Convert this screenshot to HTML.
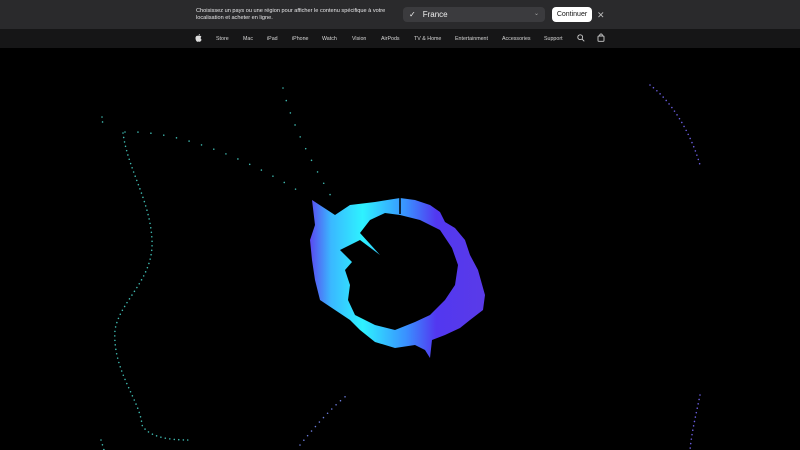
<!DOCTYPE html>
<html><head><meta charset="utf-8"><style>
*{margin:0;padding:0;box-sizing:border-box}
body{width:800px;height:450px;background:#000;overflow:hidden;font-family:"Liberation Sans",sans-serif;position:relative}
.top{position:absolute;left:0;top:0;width:800px;height:29px;background:#2a2a2c}
.msg{position:absolute;left:196px;top:8px;font-size:5.6px;line-height:7px;color:#e8e8ea;width:190px}
.sel{position:absolute;left:403px;top:7px;width:142px;height:15px;background:#3b3b3e;border-radius:4px;color:#f0f0f0;font-size:8px;line-height:15px;padding-left:6px}
.sel .c{margin-right:7px}
.sel .a{position:absolute;right:6px;top:0;font-size:6px;color:#aaa}
.btn{position:absolute;left:552px;top:7px;width:40px;height:15px;background:#fff;border-radius:4px;color:#111;font-size:7px;line-height:15px;text-align:center}
.x{position:absolute;left:597px;top:9px;color:#bbb;font-size:9px;line-height:12px}
.nav{position:absolute;left:0;top:29px;width:800px;height:19px;background:#161617}
.nav span{position:absolute;top:6.5px;font-size:5.3px;color:#d6d6d6}
</style></head><body>
<div class="top">
<div class="msg">Choisissez un pays ou une région pour afficher le contenu spécifique à votre localisation et acheter en ligne.</div>
<div class="sel"><span class="c">✓</span>France<span class="a">⌄</span></div>
<div class="btn">Continuer</div>
<div class="x">✕</div>
</div>
<div class="nav">
<svg style="position:absolute;left:195px;top:5px" width="7" height="8" viewBox="0 0 7 8"><path d="M3.5 2C2.5 1.5 0.5 1.8 0.5 4.2 0.5 6 1.8 8 2.6 7.8 3.1 7.6 3.9 7.6 4.4 7.8 5.3 8 6.4 6.5 6.6 5.6 5.5 5 5.4 3.3 6.4 2.7 5.6 1.6 4.3 1.7 3.5 2ZM3.5 1.6C3.5 0.8 4.2 0.1 4.9 0 5 0.8 4.3 1.6 3.5 1.6Z" fill="#ddd"/></svg>
<span style="left:216px">Store</span><span style="left:243px">Mac</span><span style="left:267px">iPad</span><span style="left:292px">iPhone</span><span style="left:322px">Watch</span><span style="left:352px">Vision</span><span style="left:381px">AirPods</span><span style="left:414px">TV &amp; Home</span><span style="left:455px">Entertainment</span><span style="left:502px">Accessories</span><span style="left:544px">Support</span>
<svg style="position:absolute;left:577px;top:5px" width="8" height="8" viewBox="0 0 8 8"><circle cx="3.2" cy="3.2" r="2.4" fill="none" stroke="#ccc" stroke-width="0.9"/><path d="M5 5 7.3 7.3" stroke="#ccc" stroke-width="0.9"/></svg>
<svg style="position:absolute;left:597px;top:4px" width="8" height="9" viewBox="0 0 8 9"><rect x="1" y="3" width="6" height="5.3" rx="0.8" fill="none" stroke="#ccc" stroke-width="0.9"/><path d="M2.7 3V2.2a1.3 1.3 0 0 1 2.6 0V3" fill="none" stroke="#ccc" stroke-width="0.9"/></svg>
</div>
<svg style="position:absolute;left:0;top:0" width="800" height="450">
<defs><linearGradient id="g" x1="310" y1="0" x2="485" y2="0" gradientUnits="userSpaceOnUse">
<stop offset="0" stop-color="#5a48f0"/><stop offset="0.12" stop-color="#3ab8ff"/><stop offset="0.3" stop-color="#2ef2ff"/><stop offset="0.55" stop-color="#3a90ff"/><stop offset="0.72" stop-color="#5238f0"/><stop offset="1" stop-color="#5a3ae8"/></linearGradient></defs>
<g fill="none" stroke-linecap="round" stroke-width="1.6">
<path d="M123 133C128 170 150 200 152 240 154 280 120 300 115 330 112 370 140 400 142 425 150 440 180 440 190 440" stroke="#3fb9b0" stroke-dasharray="0 4.5"/>
<path d="M102 117L103 126" stroke="#3fb9b0" stroke-dasharray="0 5"/>
<path d="M125 132C180 130 250 160 305 195" stroke="#3fb9b0" stroke-dasharray="0 13"/>
<path d="M283 88C290 120 310 160 336 205" stroke="#3fb9b0" stroke-dasharray="0 13"/>
<path d="M300 445C320 420 335 405 346 396" stroke="#6a7ad8" stroke-dasharray="0 6"/>
<path d="M101 440L104 450" stroke="#3fb9b0" stroke-dasharray="0 5"/>
<path d="M650 85C670 100 690 130 700 165" stroke="#6a5ee0" stroke-dasharray="0 4.5"/>
<path d="M700 395C696 415 692 430 690 450" stroke="#6a5ee0" stroke-dasharray="0 4.5"/>
</g>
<path fill-rule="evenodd" fill="url(#g)" d="M400 198L415 200 430 205 440 212 445 222 455 228 465 240 470 255 478 270 485 295 483 310 470 320 460 328 445 335 432 340 430 358 425 350 415 345 395 348 375 342 360 330 350 320 335 310 320 300 315 280 312 260 310 240 315 225 312 200 335 215 350 205 375 202 400 198Z M400 215L420 220 440 230 452 248 458 265 455 285 445 300 430 315 415 322 395 330 375 325 355 315 348 300 350 285 345 270 352 262 340 250 360 240 380 255 360 233 370 220 385 213Z"/>
<path d="M400 198L400 214" stroke="#000" stroke-width="1.5"/>
</svg>
</body></html>
